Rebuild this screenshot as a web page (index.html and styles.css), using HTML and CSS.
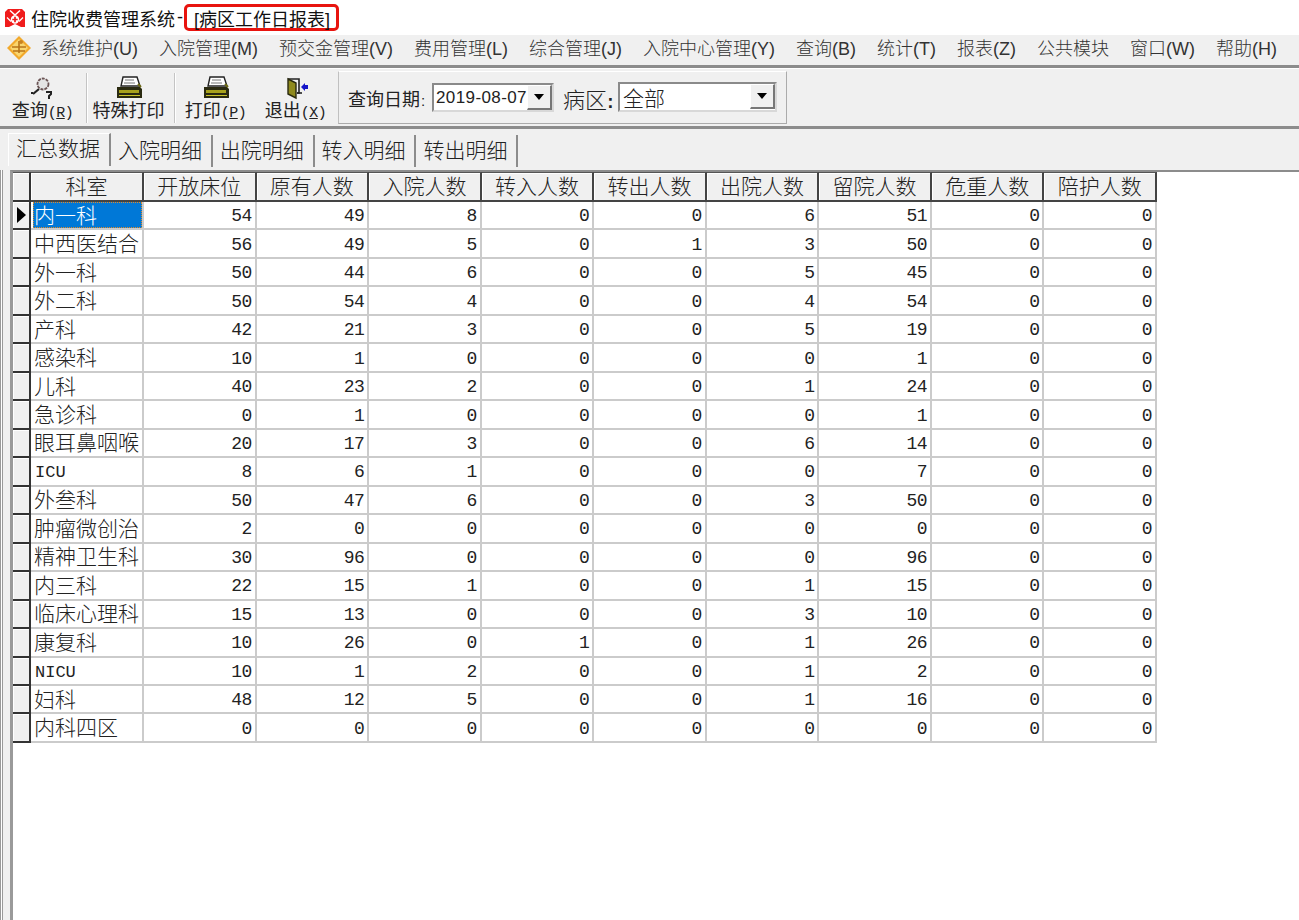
FILE: index.html
```html
<!DOCTYPE html>
<html lang="zh-CN">

<head>
  <meta charset="UTF-8">
  <title>住院收费管理系统 - [病区工作日报表]</title>
  <link rel="stylesheet" href="styles.css">
</head>

<body>
  <header class="titlebar">
    <svg class="app-icon" width="20" height="18" viewBox="0 0 20 18">
      <path d="M3 0h14l3 3v15H0V3z" fill="#f01c1c"/>
      <path d="M5 1.5 10 6l5-4.500" fill="none" stroke="#fff" stroke-width="1.500"/>
      <path d="M2 8.500 6 12.500M18 8.500 14 12.500" stroke="#fff" stroke-width="1.200"/>
      <circle cx="10" cy="10.500" r="4.200" fill="#fff"/>
      <path d="M10 7.800v5.400M7.300 10.500h5.400" stroke="#f01c1c" stroke-width="1.700"/>
      <path d="M4 18 10 15l6 3z" fill="#fff"/>
    </svg>
    <span class="app-name">住院收费管理系统</span>
    <span class="title-dash">-</span>
    <span class="title-doc">[病区工作日报表]</span>
  </header>

  <nav class="menubar">
    <svg class="menu-icon" width="26" height="26" viewBox="0 0 26 26">
      <path d="M13 1 25 13 13 25 1 13z" fill="#f2a92c"/>
      <path d="M13 4 22 13 13 22 4 13z" fill="#f9d56e"/>
      <path d="M6 12h14M7 16h12M13 6v12" stroke="#b8741a" stroke-width="1.600" fill="none"/>
      <circle cx="15" cy="7" r="2" fill="#c9821f"/>
    </svg>
    <ul class="menu-list">
      <li>系统维护(U)</li>
      <li>入院管理(M)</li>
      <li>预交金管理(V)</li>
      <li>费用管理(L)</li>
      <li>综合管理(J)</li>
      <li>入院中心管理(Y)</li>
      <li>查询(B)</li>
      <li>统计(T)</li>
      <li>报表(Z)</li>
      <li>公共模块</li>
      <li>窗口(W)</li>
      <li>帮助(H)</li>
    </ul>
  </nav>

  <section class="toolbar">
    <button class="tool tool-query">
      <svg width="40" height="30" viewBox="0 0 40 30">
        <circle cx="20" cy="12" r="5.500" fill="#e4e4e4" stroke="#6b5555" stroke-width="1.800" stroke-dasharray="3 1"/>
        <path d="M16 17 10 22" stroke="#222" stroke-width="2.200"/>
        <path d="M8 21h2" stroke="#222" stroke-width="2"/>
        <path d="M23 20h5v2l-2 2v3" fill="none" stroke="#222" stroke-width="2"/>
      </svg>
      <span class="tool-label">查询<span class="hotkey">(<u>R</u>)</span></span>
    </button>
    <i class="tool-sep"></i>
    <button class="tool tool-special">
      <svg width="40" height="30" viewBox="0 0 40 30">
        <path d="M14 5h14l3 9H12z" fill="#fff" stroke="#222" stroke-width="1.400"/>
        <path d="M16 8h9M15 11h11" stroke="#777" stroke-width="1"/>
        <path d="M8 15h23l2 2v9H8z" fill="#2a2a10"/>
        <path d="M10 18h20v3H10z" fill="#a7a11c"/>
        <path d="M10 23h21v1H10z" fill="#c9c22a"/>
        <path d="M29 12l3 3" stroke="#6d6a14" stroke-width="2"/>
      </svg>
      <span class="tool-label">特殊打印</span>
    </button>
    <i class="tool-sep"></i>
    <button class="tool tool-print">
      <svg width="40" height="30" viewBox="0 0 40 30">
        <path d="M14 5h14l3 9H12z" fill="#fff" stroke="#222" stroke-width="1.400"/>
        <path d="M16 8h9M15 11h11" stroke="#777" stroke-width="1"/>
        <path d="M8 15h23l2 2v9H8z" fill="#2a2a10"/>
        <path d="M10 18h20v3H10z" fill="#a7a11c"/>
        <path d="M10 23h21v1H10z" fill="#c9c22a"/>
        <path d="M29 12l3 3" stroke="#6d6a14" stroke-width="2"/>
      </svg>
      <span class="tool-label">打印<span class="hotkey">(<u>P</u>)</span></span>
    </button>
    <button class="tool tool-exit">
      <svg width="40" height="30" viewBox="0 0 40 30">
        <path d="M12 7h11v14h-2" fill="none" stroke="#222" stroke-width="1.600"/>
        <path d="M12 7l8 4v15l-8-4z" fill="#8f8a1e" stroke="#2a2a10" stroke-width="1.400"/>
        <path d="M21 21h5" stroke="#222" stroke-width="1.600"/>
        <path d="M25 15l4-4v2h3v4h-3v2z" fill="#1414c8"/>
      </svg>
      <span class="tool-label">退出<span class="hotkey">(<u>X</u>)</span></span>
    </button>
    <div class="filter-panel">
      <label class="date-label">查询日期<span class="colon">:</span></label>
      <div class="date-box">
        <span class="date-value">2019-08-07</span>
        <span class="drop-btn"><i></i></span>
      </div>
      <label class="ward-label">病区<span class="ward-colon">:</span></label>
      <div class="ward-box">
        <span class="ward-value">全部</span>
        <span class="drop-btn"><i></i></span>
      </div>
    </div>
  </section>

  <ul class="tabs">
    <li class="tab active">汇总数据</li>
    <li class="tab">入院明细</li>
    <li class="tab">出院明细</li>
    <li class="tab">转入明细</li>
    <li class="tab">转出明细</li>
  </ul>

  <main class="grid-frame">
    <div class="grid-body">
      <table class="grid">
        <thead>
          <tr><th class="ind"></th><th>科室</th><th>开放床位</th><th>原有人数</th><th>入院人数</th><th>转入人数</th><th>转出人数</th><th>出院人数</th><th>留院人数</th><th>危重人数</th><th>陪护人数</th></tr>
        </thead>
        <tbody>
          <tr class="current"><td class="ind"><i class="pointer"></i></td><td class="dept"><span class="selected">内一科</span></td><td>54</td><td>49</td><td>8</td><td>0</td><td>0</td><td>6</td><td>51</td><td>0</td><td>0</td></tr>
          <tr><td class="ind"></td><td class="dept">中西医结合</td><td>56</td><td>49</td><td>5</td><td>0</td><td>1</td><td>3</td><td>50</td><td>0</td><td>0</td></tr>
          <tr><td class="ind"></td><td class="dept">外一科</td><td>50</td><td>44</td><td>6</td><td>0</td><td>0</td><td>5</td><td>45</td><td>0</td><td>0</td></tr>
          <tr><td class="ind"></td><td class="dept">外二科</td><td>50</td><td>54</td><td>4</td><td>0</td><td>0</td><td>4</td><td>54</td><td>0</td><td>0</td></tr>
          <tr><td class="ind"></td><td class="dept">产科</td><td>42</td><td>21</td><td>3</td><td>0</td><td>0</td><td>5</td><td>19</td><td>0</td><td>0</td></tr>
          <tr><td class="ind"></td><td class="dept">感染科</td><td>10</td><td>1</td><td>0</td><td>0</td><td>0</td><td>0</td><td>1</td><td>0</td><td>0</td></tr>
          <tr><td class="ind"></td><td class="dept">儿科</td><td>40</td><td>23</td><td>2</td><td>0</td><td>0</td><td>1</td><td>24</td><td>0</td><td>0</td></tr>
          <tr><td class="ind"></td><td class="dept">急诊科</td><td>0</td><td>1</td><td>0</td><td>0</td><td>0</td><td>0</td><td>1</td><td>0</td><td>0</td></tr>
          <tr><td class="ind"></td><td class="dept">眼耳鼻咽喉</td><td>20</td><td>17</td><td>3</td><td>0</td><td>0</td><td>6</td><td>14</td><td>0</td><td>0</td></tr>
          <tr><td class="ind"></td><td class="dept latin">ICU</td><td>8</td><td>6</td><td>1</td><td>0</td><td>0</td><td>0</td><td>7</td><td>0</td><td>0</td></tr>
          <tr><td class="ind"></td><td class="dept">外叁科</td><td>50</td><td>47</td><td>6</td><td>0</td><td>0</td><td>3</td><td>50</td><td>0</td><td>0</td></tr>
          <tr><td class="ind"></td><td class="dept">肿瘤微创治</td><td>2</td><td>0</td><td>0</td><td>0</td><td>0</td><td>0</td><td>0</td><td>0</td><td>0</td></tr>
          <tr><td class="ind"></td><td class="dept">精神卫生科</td><td>30</td><td>96</td><td>0</td><td>0</td><td>0</td><td>0</td><td>96</td><td>0</td><td>0</td></tr>
          <tr><td class="ind"></td><td class="dept">内三科</td><td>22</td><td>15</td><td>1</td><td>0</td><td>0</td><td>1</td><td>15</td><td>0</td><td>0</td></tr>
          <tr><td class="ind"></td><td class="dept">临床心理科</td><td>15</td><td>13</td><td>0</td><td>0</td><td>0</td><td>3</td><td>10</td><td>0</td><td>0</td></tr>
          <tr><td class="ind"></td><td class="dept">康复科</td><td>10</td><td>26</td><td>0</td><td>1</td><td>0</td><td>1</td><td>26</td><td>0</td><td>0</td></tr>
          <tr><td class="ind"></td><td class="dept latin">NICU</td><td>10</td><td>1</td><td>2</td><td>0</td><td>0</td><td>1</td><td>2</td><td>0</td><td>0</td></tr>
          <tr><td class="ind"></td><td class="dept">妇科</td><td>48</td><td>12</td><td>5</td><td>0</td><td>0</td><td>1</td><td>16</td><td>0</td><td>0</td></tr>
          <tr><td class="ind"></td><td class="dept">内科四区</td><td>0</td><td>0</td><td>0</td><td>0</td><td>0</td><td>0</td><td>0</td><td>0</td><td>0</td></tr>
        </tbody>
      </table>
    </div>
  </main>
</body>

</html>
```

FILE: styles.css
```css
/* Globals */
* {
  box-sizing: border-box;
}

html,
body {
  margin: 0;
  height: 920px;
  overflow: hidden;
}

body {
  display: flex;
  flex-direction: column;
  background: #f0f0f0;
  color: #222;
  font-family: "Liberation Sans", "Noto Sans CJK SC", sans-serif;
}

ul {
  list-style: none;
  margin: 0;
  padding: 0;
}

/* Title bar */
.titlebar {
  display: flex;
  align-items: center;
  height: 35px;
  padding-left: 5px;
  background: #fff;
  font-size: 18px;
  color: #111;
}

.app-icon {
  margin-right: 6px;
}

.title-dash {
  width: 9px;
  padding-left: 2px;
}

.title-doc {
  display: flex;
  align-items: center;
  width: 155px;
  height: 27px;
  padding-left: 7px;
  border: 3px solid #e8140f;
  border-radius: 5px;
  white-space: nowrap;
}

/* Menu bar */
.menubar {
  display: flex;
  align-items: center;
  height: 27px;
  padding: 0 0 2px 6px;
  font-size: 18px;
  font-weight: 300;
  color: #333;
}

.menu-list {
  display: flex;
  margin-left: -1.5px;
  padding-bottom: 2px;
}

.menu-list li {
  padding-inline: 10.5px;
  white-space: nowrap;
}

/* Toolbar */
.toolbar {
  display: flex;
  height: 64px;
  margin-top: 3px;
  padding: 3px 0 0 5px;
  border-top: 3px solid #8c8c8c;
  border-bottom: 3px solid #8c8c8c;
  box-shadow: inset 0 1px 0 #fff;
}

.tool {
  display: flex;
  flex-direction: column;
  align-items: center;
  width: 80px;
  padding: 1px 5px 0 0;
  border: 0;
  background: none;
  font-family: inherit;
  font-size: 18px;
  color: #222;
}

.tool-special {
  width: 84px;
}

.tool-label {
  margin-top: -2px;
  line-height: 22px;
  white-space: nowrap;
}

.hotkey {
  font-family: "Liberation Mono", monospace;
  font-size: 15px;
  letter-spacing: -0.5px;
}

.tool-sep {
  width: 2px;
  height: 50px;
  margin: 2px 1px 0;
  background: #c4c4c4;
  border-right: 1px solid #fff;
}

.tool-print {
  margin-left: 1px;
}

/* Date and ward filters */
.filter-panel {
  display: flex;
  align-items: center;
  width: 449px;
  height: 53px;
  padding-left: 9px;
  border: 1px solid #ababab;
  border-top-color: #fff;
  border-left-color: #c0c0c0;
}

.date-label {
  width: 84px;
  font-size: 18px;
  white-space: nowrap;
}

.colon {
  margin-left: 1px;
  font-size: 15px;
}

.date-box,
.ward-box {
  display: flex;
  align-items: center;
  justify-content: space-between;
  background: #fff;
  border: 2px solid #8a8a8a;
  border-right-color: #d8d8d8;
  border-bottom-color: #d8d8d8;
}

.date-box {
  width: 122px;
  height: 29px;
  padding-left: 2px;
}

.date-value {
  font-size: 17px;
  letter-spacing: 0.4px;
  white-space: nowrap;
}

.ward-label {
  width: 55px;
  margin-left: 9px;
  font-size: 22px;
  font-weight: 300;
  white-space: nowrap;
}

.ward-colon {
  margin-left: -2px;
  font-family: "Liberation Mono", monospace;
  font-weight: 700;
  font-size: 18px;
}

.ward-box {
  width: 159px;
  height: 30px;
  margin-top: -2px;
  padding-left: 3px;
}

.ward-value {
  font-size: 21px;
  font-weight: 300;
}

.drop-btn {
  display: flex;
  align-items: center;
  justify-content: center;
  flex: none;
  width: 25px;
  height: 25px;
  background: #f0f0f0;
  border: 1px solid #fff;
  border-right: 2px solid #777;
  border-bottom: 2px solid #777;
}

.drop-btn i {
  border: 5px solid transparent;
  border-top: 6px solid #000;
  border-bottom: 0;
}

/* Tabs */
.tabs {
  display: flex;
  height: 41px;
  padding: 4px 0 0 8px;
  font-size: 21px;
}

.tab {
  width: 101.8px;
  height: 32px;
  padding-left: 7px;
  margin-top: 2px;
  line-height: 31px;
  font-weight: 300;
  border-right: 2px solid #8c8c8c;
  white-space: nowrap;
}

.tab.active {
  width: 103px;
  height: 33px;
  padding-left: 8px;
  margin-top: 0;
  line-height: 30px;
  border-top: 1px solid #fff;
  box-shadow: inset 1px 0 0 #fff;
}

/* Data grid */
.grid-frame {
  flex: 1;
  min-height: 0;
  padding-left: 10px;
  box-shadow: inset 1px 0 0 #9a9a9a, inset 2px 0 0 #fff, inset 3px 0 0 #9a9a9a;
}

.grid-body {
  height: 100%;
  background: #fff;
  border-top: 2px solid #8c8c8c;
  border-left: 3px solid #9a9a9a;
}

.grid {
  table-layout: fixed;
  width: 1144px;
  border-collapse: separate;
  border-spacing: 0;
}

.grid th,
.grid td {
  width: 112.5px;
  padding: 0;
  white-space: nowrap;
}

.grid th {
  height: 30px;
  background: #f0f0f0;
  border-top: 1px solid #555;
  border-right: 2px solid #444;
  border-bottom: 2px solid #444;
  box-shadow: inset 1px 1px 0 #fff;
  font-size: 21px;
  font-weight: 300;
  line-height: 25px;
}

.grid td {
  height: 28.47px;
  padding: 2px 3px 0 0;
  border-right: 2px solid #cbcbcb;
  border-bottom: 2px solid #cbcbcb;
  text-align: right;
  font-family: "Liberation Mono", monospace;
  font-size: 18px;
  letter-spacing: -0.6px;
  line-height: 22px;
}

.grid .ind {
  width: 18px;
  padding: 0;
  background: #f0f0f0;
  border-right: 2px solid #333;
  border-bottom: 2px solid #333;
  box-shadow: inset 1px 1px 0 #fff;
}

.grid th:nth-child(2),
.grid td.dept {
  width: 113px;
}

.grid td.dept {
  padding: 0 0 3px 3px;
  text-align: left;
  font-family: "Noto Sans CJK SC", sans-serif;
  font-size: 21px;
  font-weight: 300;
  letter-spacing: 0;
  line-height: 22px;
}

.grid td.latin {
  padding: 4px 0 0 4px;
  font-family: "Liberation Mono", monospace;
  font-size: 17px;
}

.grid td.dept:has(.selected) {
  padding: 0 0 0 2px;
}

.selected {
  display: block;
  height: 26px;
  padding-left: 1px;
  line-height: 24px;
  background: #0078d7;
  color: #fff;
  outline: 1px dotted #e08a2a;
  outline-offset: -1px;
}

.current .ind {
  position: relative;
}

.pointer {
  position: absolute;
  left: 4px;
  top: 5px;
  border: 8px solid transparent;
  border-left: 9px solid #000;
  border-right: 0;
}
```
